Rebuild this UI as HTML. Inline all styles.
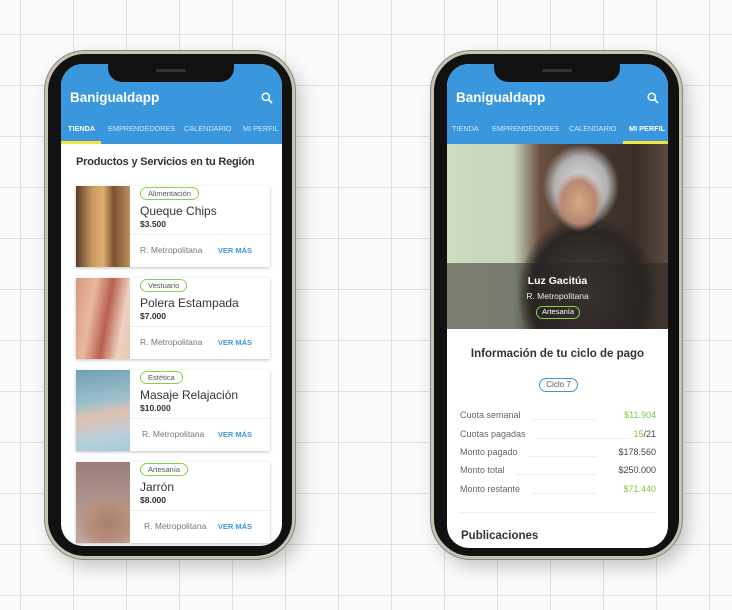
<!DOCTYPE html>
<html><head><meta charset="utf-8"><style>
*{margin:0;padding:0;box-sizing:border-box}
body{width:732px;height:610px;overflow:hidden;font-family:"Liberation Sans",sans-serif;position:relative;
background-color:#fafafa;
background-image:linear-gradient(#e0e0e0 1px,transparent 1px),linear-gradient(90deg,#e0e0e0 1px,transparent 1px);
background-size:53px 51px;background-position:20px 34px}
.phone{position:absolute;border-radius:40px;background:#111;border:3px solid #c9c2b0;box-shadow:0 0 0 1px #888,6px 8px 18px rgba(0,0,0,.22)}
.screen{position:absolute;background:#fff;border-radius:22px;overflow:hidden}
.notch{position:absolute;top:0;left:47px;width:126px;height:18px;background:#111;border-radius:0 0 14px 14px}
.notch:after{content:"";position:absolute;left:48px;top:5px;width:30px;height:3px;border-radius:2px;background:#333}
.bar{position:absolute;left:0;top:0;width:100%;height:80px;background:#3a97dd;color:#fff}
.title{position:absolute;left:9px;top:26px;font-size:13.5px;font-weight:bold}
.search{position:absolute;right:9px;top:28px}
.tabs{position:absolute;top:60px;left:0;width:100%;font-size:7.3px;color:#cfe6f8;white-space:nowrap}
.tabs span{position:absolute}
.tabs .on{color:#fff;font-weight:bold}
.ul{position:absolute;bottom:0;height:3px;background:#f0e23a}
.h{position:absolute;font-size:12px;font-weight:bold;color:#333;white-space:nowrap}
.card{position:absolute;left:15px;width:194px;height:81px;background:#fff;box-shadow:0 1px 3px rgba(0,0,0,.25);border-radius:2px}
.img{position:absolute;left:0;top:0;width:54px;height:81px}
.tag{position:absolute;left:64px;top:1px;height:13px;border:1.5px solid #8ad04b;border-radius:7px;font-size:7.5px;color:#555;padding:0 7px;line-height:11px}
.nm{position:absolute;left:64px;top:18px;font-size:12px;color:#333}
.pr{position:absolute;left:64px;top:33px;font-size:8.5px;font-weight:bold;color:#333}
.dv{position:absolute;left:54px;right:0;top:48px;border-top:1px solid #eee}
.rg{position:absolute;left:64px;top:59px;font-size:8.5px;color:#777}
.vm{position:absolute;right:18px;top:60px;font-size:7.5px;font-weight:bold;color:#3a97dd}
.row{position:absolute;left:13px;right:12px;font-size:9px;color:#666;height:12px}
.row .v{position:absolute;right:0;top:0;color:#444}
.row .d{position:absolute;left:72px;right:60px;top:9px;border-top:1px solid #eee}
.g{color:#7cc943!important}
</style></head><body>

<div class="phone" style="left:45px;top:51px;width:250px;height:508px"></div>
<div class="screen" style="left:61px;top:64px;width:221px;height:482px">
  <div class="bar">
    <div class="title">Banigualdapp</div>
    <svg class="search" width="12" height="12" viewBox="0 0 12 12"><circle cx="4.8" cy="4.8" r="3.6" stroke="#fff" stroke-width="1.5" fill="none"/><path d="M7.5 7.5L11 11" stroke="#fff" stroke-width="1.7"/></svg>
    <div class="tabs">
      <span class="on" style="left:7px">TIENDA</span>
      <span style="left:47px">EMPRENDEDORES</span>
      <span style="left:123px">CALENDARIO</span>
      <span style="left:182px">MI PERFIL</span>
    </div>
    <div class="ul" style="left:0;width:40px"></div>
  </div>
  <div class="notch"></div>
  <div class="h" style="left:15px;top:92px;font-size:11px;letter-spacing:-0.2px">Productos y Servicios en tu Región</div>

  <div class="card" style="top:122px"><div class="img" style="background:linear-gradient(90deg,#5a3a2a 0,#c89860 30%,#e0b070 50%,#7a5030 70%,#c09060 100%)"></div>
    <div class="tag">Alimentación</div><div class="nm">Queque Chips</div><div class="pr">$3.500</div><div class="dv"></div><div class="rg">R. Metropolitana</div><div class="vm">VER MÁS</div></div>
  <div class="card" style="top:214px"><div class="img" style="background:linear-gradient(100deg,#d89880,#e8b8a0 30%,#b86050 55%,#f0d0c0 80%,#e0c8b0)"></div>
    <div class="tag">Vestuario</div><div class="nm">Polera Estampada</div><div class="pr">$7.000</div><div class="dv"></div><div class="rg">R. Metropolitana</div><div class="vm">VER MÁS</div></div>
  <div class="card" style="top:306px"><div class="img" style="background:linear-gradient(170deg,#6f9fb5 0,#9fc0cc 40%,#e0c0b0 55%,#b8d0dc 80%,#a8c8d8)"></div>
    <div class="tag">Estética</div><div class="nm">Masaje Relajación</div><div class="pr">$10.000</div><div class="dv"></div><div class="rg" style="left:66px">R. Metropolitana</div><div class="vm">VER MÁS</div></div>
  <div class="card" style="top:398px"><div class="img" style="background:radial-gradient(circle at 60% 75%,#a88068 0,#b89080 30%,transparent 45%),linear-gradient(#9a8078,#c0a8a0)"></div>
    <div class="tag">Artesanía</div><div class="nm">Jarrón</div><div class="pr">$8.000</div><div class="dv"></div><div class="rg" style="left:68px">R. Metropolitana</div><div class="vm">VER MÁS</div></div>
</div>

<div class="phone" style="left:431px;top:51px;width:251px;height:508px"></div>
<div class="screen" style="left:447px;top:64px;width:221px;height:484px">
  <div class="bar">
    <div class="title">Banigualdapp</div>
    <svg class="search" width="12" height="12" viewBox="0 0 12 12"><circle cx="4.8" cy="4.8" r="3.6" stroke="#fff" stroke-width="1.5" fill="none"/><path d="M7.5 7.5L11 11" stroke="#fff" stroke-width="1.7"/></svg>
    <div class="tabs">
      <span style="left:5px">TIENDA</span>
      <span style="left:45px">EMPRENDEDORES</span>
      <span style="left:122px">CALENDARIO</span>
      <span class="on" style="left:182px">MI PERFIL</span>
    </div>
    <div class="ul" style="left:176px;width:45px"></div>
  </div>
  <div class="notch"></div>
  <div style="position:absolute;left:0;top:80px;width:221px;height:185px;background:
    radial-gradient(ellipse 24px 30px at 132px 58px,#d8a888 0,#b88870 70%,transparent 100%),
    radial-gradient(ellipse 38px 42px at 134px 42px,#e0e0e0 0,#b0b0b0 70%,transparent 100%),
    radial-gradient(ellipse 70px 80px at 140px 150px,#4a4038 0,#2a2624 80%,transparent 100%),
    linear-gradient(90deg,#d0dcc0 0,#c8d4bc 30%,#6a5040 42%,#4a3a30 60%,#3a2e28 85%,#5a4a40 100%)">
    <div style="position:absolute;left:0;bottom:0;width:100%;height:66px;background:rgba(40,35,35,.5)"></div>
    <div style="position:absolute;width:100%;top:131px;text-align:center;color:#fff;font-size:10.5px;font-weight:bold">Luz Gacitúa</div>
    <div style="position:absolute;width:100%;top:147px;text-align:center;color:#eee;font-size:8.5px">R. Metropolitana</div>
    <div style="position:absolute;left:89px;top:162px;height:13px;width:44px;border:1.5px solid #8ad04b;border-radius:7px;color:#fff;font-size:7.5px;text-align:center;line-height:10px">Artesanía</div>
  </div>
  <div class="h" style="left:0;width:221px;text-align:center;top:284px;font-size:11.5px">Información de tu ciclo de pago</div>
  <div style="position:absolute;left:92px;top:314px;width:39px;height:14px;border:1.5px solid #3a97dd;border-radius:8px;font-size:8px;color:#555;text-align:center;line-height:11px">Ciclo 7</div>
  <div class="row" style="top:346px">Cuota semanal<div class="d"></div><span class="v g">$11.904</span></div>
  <div class="row" style="top:365px">Cuotas pagadas<div class="d" style="left:76px;right:26px"></div><span class="v"><span class="g">15</span>/21</span></div>
  <div class="row" style="top:383px">Monto pagado<div class="d" style="left:68px"></div><span class="v">$178.560</span></div>
  <div class="row" style="top:401px">Monto total<div class="d" style="left:56px"></div><span class="v">$250.000</span></div>
  <div class="row" style="top:420px">Monto restante<div class="d"></div><span class="v g">$71.440</span></div>
  <div style="position:absolute;left:13px;right:12px;top:448px;border-top:1px solid #eee"></div>
  <div class="h" style="left:14px;top:466px;font-size:11.5px">Publicaciones</div>
</div>
</body></html>
